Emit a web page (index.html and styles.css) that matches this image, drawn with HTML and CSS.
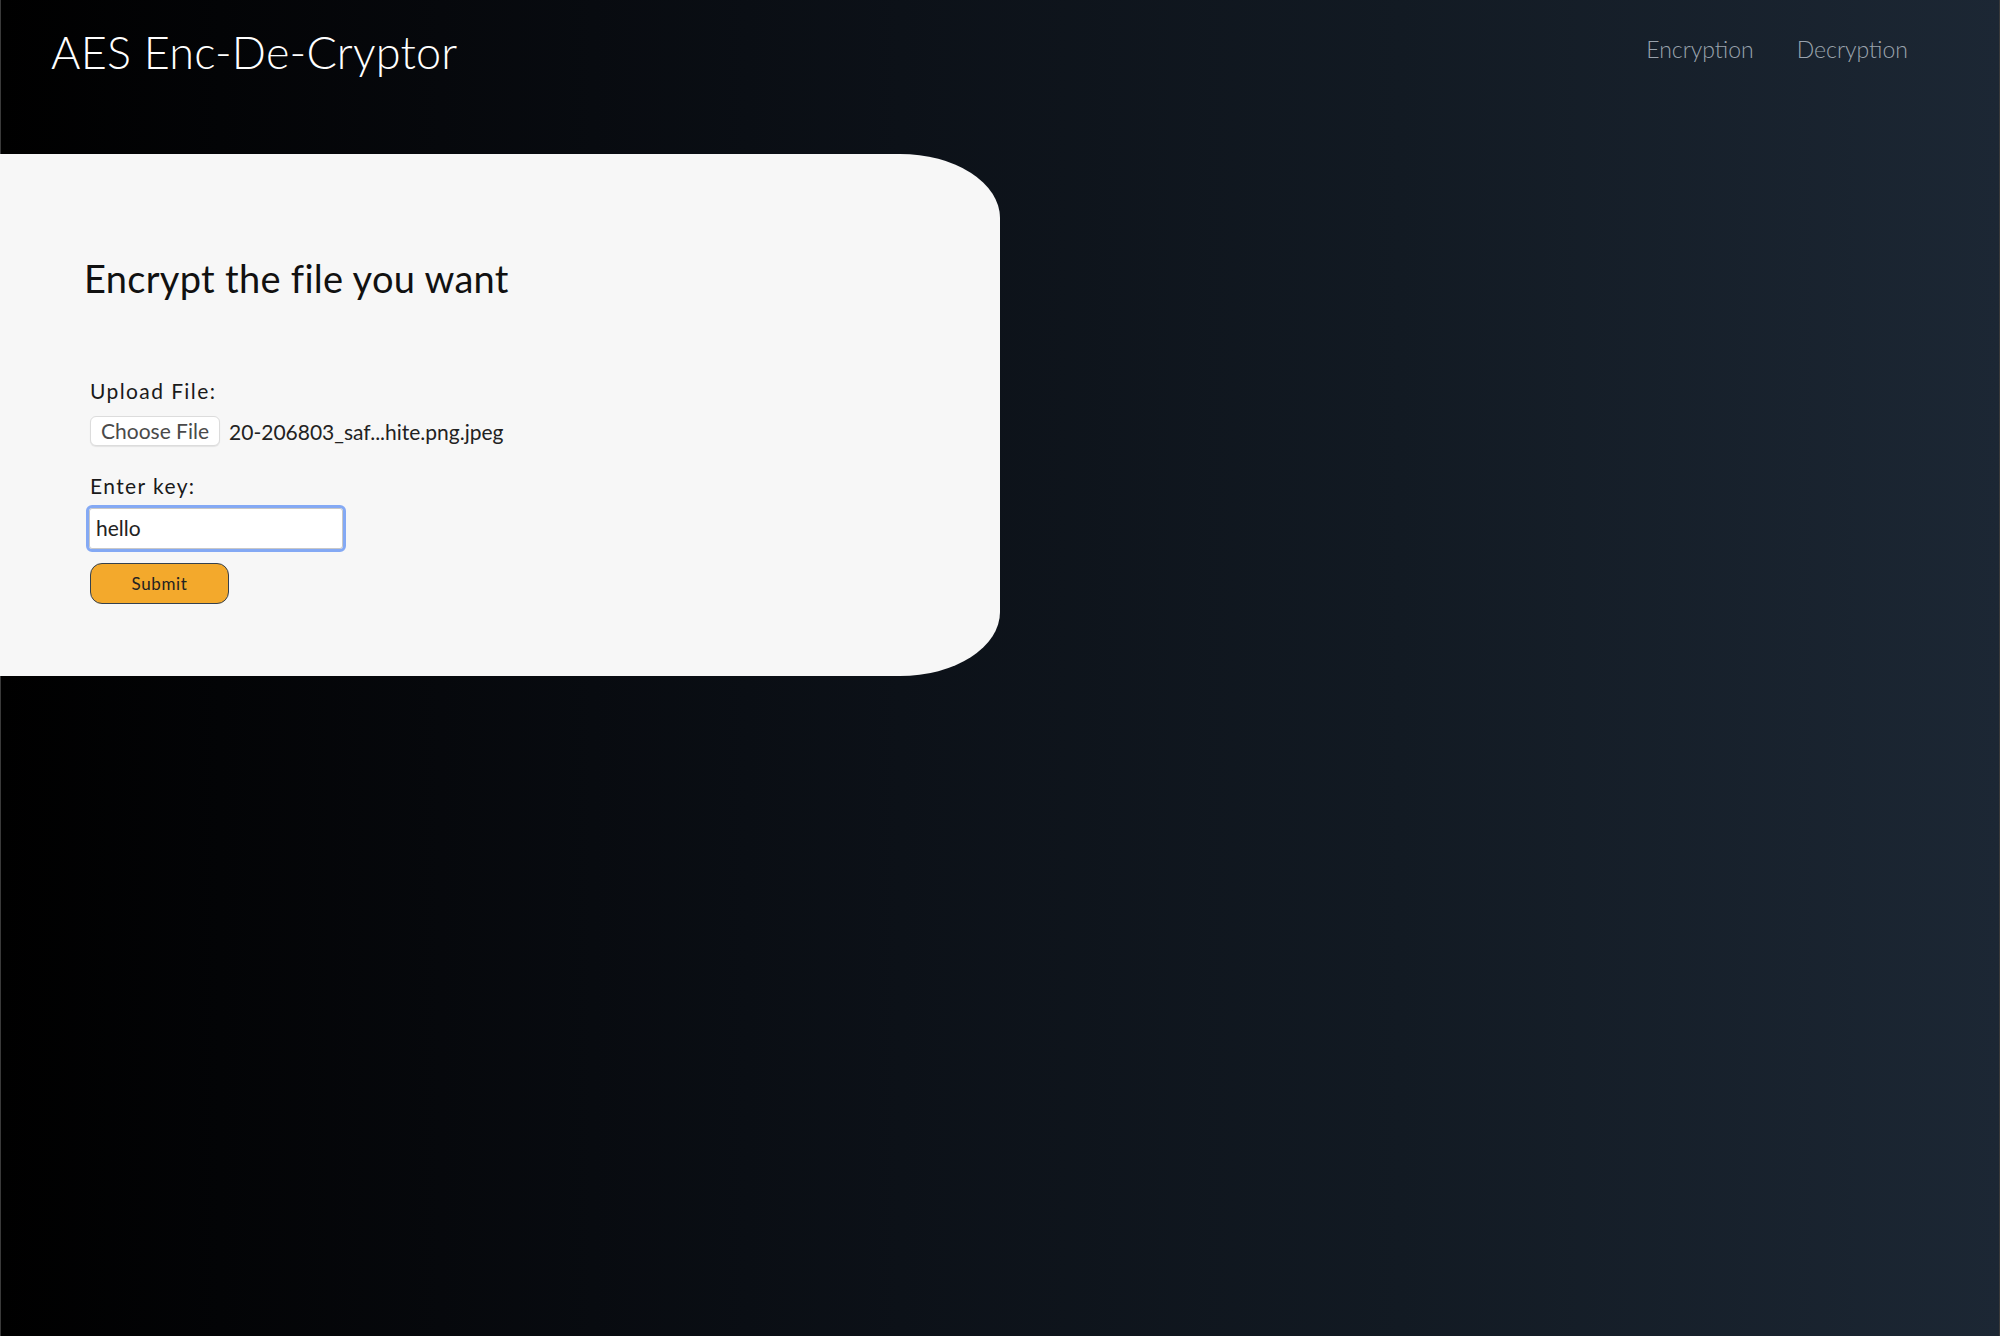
FILE: index.html
```html
<!DOCTYPE html>
<html lang="en">
<head>
<meta charset="utf-8">
<title>AES Enc-De-Cryptor</title>
<link rel="stylesheet" href="styles.css">
</head>
<body>
<header class="topbar">
  <h1 class="brand">AES Enc-De-Cryptor</h1>
  <nav class="nav">
    <a class="nav-link" href="#">Encryption</a>
    <a class="nav-link" href="#">Decryption</a>
  </nav>
</header>
<main class="card">
  <h2 class="card-title">Encrypt the file you want</h2>
  <form class="form">
    <label class="field-label">Upload File:</label>
    <div class="file-row">
      <span class="file-btn">Choose File</span>
      <span class="file-name">20-206803_saf...hite.png.jpeg</span>
    </div>
    <label class="field-label key-label">Enter key:</label>
    <div class="key-input">hello</div>
    <button class="submit" type="button">Submit</button>
  </form>
</main>
</body>
</html>
```
FILE: styles.css
```css
html, body {
  margin: 0;
  padding: 0;
}
body {
  width: 2000px;
  height: 1336px;
  overflow: hidden;
  font-family: "Lato", "Noto Sans", sans-serif;
  background: linear-gradient(to right, #000000 0%, #06080c 22%, #0c1118 45%, #121a23 70%, #1c2734 100%);
  box-shadow: inset 1px 0 0 #3a3a3a, inset -1px 0 0 #3a3a3a;
}
.topbar {
  height: 154px;
  display: flex;
  justify-content: space-between;
  align-items: flex-start;
  padding: 0 92px 0 51px;
  box-sizing: border-box;
}
.brand {
  margin: 25px 0 0;
  font-size: 45px;
  font-weight: 300;
  color: #ffffff;
  letter-spacing: 0.2px;
}
.nav {
  display: flex;
  gap: 43px;
  margin-top: 35px;
}
.nav-link {
  color: #9aa3ad;
  font-size: 23px;
  font-weight: 300;
  text-decoration: none;
}
.card {
  width: 1000px;
  height: 522px;
  box-sizing: border-box;
  background: #f7f7f7;
  border-radius: 0 100px 100px 0 / 0 64px 64px 0;
  padding: 101px 0 0 84px;
}
.card-title {
  margin: 0 0 77px;
  font-size: 38px;
  font-weight: 400;
  color: #111;
  letter-spacing: 0.3px;
}
.form {
  display: flex;
  flex-direction: column;
  align-items: flex-start;
  padding-left: 6px;
}
.field-label {
  font-size: 21px;
  font-weight: 400;
  color: #1a1a1a;
  letter-spacing: 1.4px;
}
.file-row {
  display: flex;
  align-items: center;
  gap: 9px;
  margin-top: 13px;
}
.file-btn {
  display: inline-block;
  background: #fff;
  border: 1px solid #dcdcdc;
  border-radius: 6px;
  padding: 1px 10px 2px;
  font-size: 21px;
  color: #4a4a4a;
  font-weight: 400;
  box-shadow: 0 1px 1px rgba(0,0,0,0.08);
}
.file-name {
  font-size: 21px;
  color: #222;
}
.key-label {
  margin-top: 27px;
}
.key-input {
  margin: 10px 0 0 -1px;
  width: 254px;
  height: 41px;
  box-sizing: border-box;
  background: #fff;
  border: 1px solid #c8c8c8;
  outline: 3px solid #84a9f4;
  outline-offset: 0;
  border-radius: 3px;
  padding: 6px 6px;
  font-size: 21px;
  color: #222;
  font-weight: 400;
}
.submit {
  margin-top: 14px;
  width: 139px;
  height: 41px;
  background: #f3a92c;
  border: 1.5px solid #34414f;
  border-radius: 12px;
  font-family: inherit;
  font-size: 17px;
  font-weight: 400;
  color: #222;
  letter-spacing: 0.6px;
}
```
